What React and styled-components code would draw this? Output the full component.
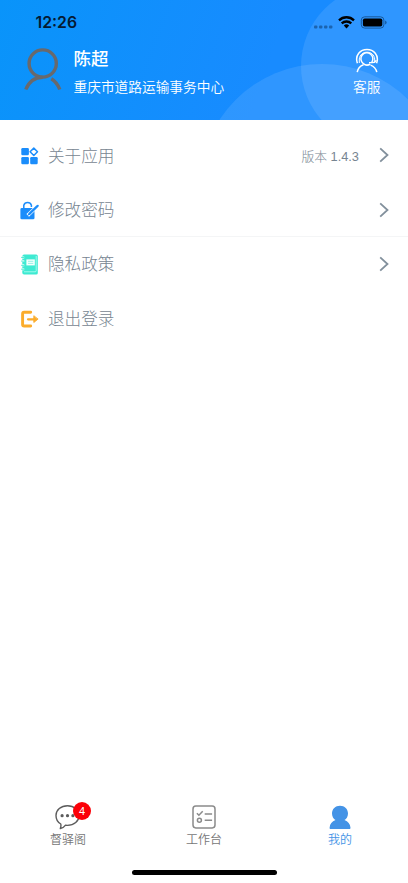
import React from "react";
import styled, { createGlobalStyle } from "styled-components";

const App = () => {
  return (
    <Screen>
      <GlobalStyle />
      <Header>
        <StatusBar>
          <Time>12:26</Time>
          <StatusIcons />
        </StatusBar>
        <Profile>
          <AvatarIcon />
          <Info>
            <Name>陈超</Name>
            <Company>重庆市道路运输事务中心</Company>
          </Info>
          <Service>
            <ServiceIcon />
            <span>客服</span>
          </Service>
        </Profile>
      </Header>
      <Menu>
        {rows.map(({ label, Icon, extra, arrow, divider }) => (
          <Row key={label} $divider={divider}>
            <Icon />
            <Label>{label}</Label>
            {extra && <Extra>{extra}</Extra>}
            {arrow && <Arrow />}
          </Row>
        ))}
      </Menu>
      <TabBar>
        {tabs.map(({ label, Icon, badge, active }) => (
          <Tab key={label} $active={active}>
            <Icon />
            <span>{label}</span>
            {badge && <Badge>{badge}</Badge>}
          </Tab>
        ))}
      </TabBar>
      <HomeArea>
        <HomeIndicator />
      </HomeArea>
    </Screen>
  );
};

const StatusIcons = () => (
  <svg width="76" height="18" viewBox="0 0 76 18">
    <g fill="#1b63af">
      <rect x="2" y="11.5" width="3.4" height="3" rx="1" />
      <rect x="7" y="11.5" width="3.4" height="3" rx="1" />
      <rect x="12" y="11.5" width="3.4" height="3" rx="1" />
      <rect x="17" y="11.5" width="3.4" height="3" rx="1" />
    </g>
    <g fill="none" stroke="#000" strokeWidth="2.3">
      <path d="M27 6.3a10.800 10.800 0 0 1 15 0" />
      <path d="M29.700 9.400a7 7 0 0 1 9.600 0" />
    </g>
    <path d="M31.800 11.500a4.200 4.200 0 0 1 5.400 0l-2.700 2.900z" fill="#000" />
    <rect x="49.3" y="2.8" width="22.6" height="11.3" rx="3.4" fill="none" stroke="#17599d" />
    <rect x="50.9" y="4.400" width="19.4" height="8.1" rx="1.8" fill="#000" />
    <path d="M73.1 6.500v4q1.500-.6 1.500-2t-1.500-2" fill="#17599d" />
  </svg>
);

const AvatarIcon = () => (
  <AvatarSvg width="38" height="43" viewBox="0 0 38 43" fill="none" stroke="#68696d" strokeWidth="3.4">
    <circle cx="18.7" cy="15.5" r="13.6" />
    <path d="M1.8 41.5C4.5 34.5 10.2 29.4 18.7 29.2M27.3 30.8c4 2.5 6.7 6 8.5 10.7" />
  </AvatarSvg>
);

const ServiceIcon = () => (
  <svg width="24" height="25" viewBox="0 0 24 25" fill="none" stroke="#fff" strokeWidth="1.5">
    <path d="M2.4 15.2C-.5 6.8 5.6 1.5 12 1.5s12.5 5.3 9.6 13.7" />
    <path d="M4.3 15v-4C4.8 6.8 8 4.2 12 4.2s7.2 2.6 7.7 6.8v4" strokeWidth="1" />
    <path d="M16.8 14.2A6 6 0 1 0 8.3 15.6c2.3 2 5 1.7 7 .4" />
    <path d="M14 14.6h3.4q3 0 3.8-2.5" strokeWidth="1.3" />
    <path d="M2.2 24.2c.7-3.8 2.8-6.2 6.3-7.4M15.6 17.1c3.4 1.3 5.4 3.5 6.2 7.1" />
  </svg>
);

const AppsIcon = () => (
  <svg width="20" height="20" viewBox="0 0 20 20" fill="#1b8dfb">
    <rect x="1.3" y="2.1" width="7.6" height="7.1" rx="1.2" />
    <rect x="1.3" y="11" width="7.6" height="7.2" rx="1.2" />
    <rect x="10.2" y="11" width="7.5" height="7.2" rx="1.2" />
    <path d="M13.8 2.1 17.5 5.8 13.8 9.5 10.1 5.8z" fill="none" stroke="#1b8dfb" strokeWidth="1.5" strokeLinejoin="round" />
  </svg>
);

const PasswordIcon = () => (
  <svg width="20" height="20" viewBox="0 0 20 20">
    <path d="M3.8 9V5.2a4 4 0 0 1 7.6 0V7" fill="none" stroke="#1b8dfb" strokeWidth="1.5" />
    <rect x=".4" y="8" width="14.1" height="11.3" rx="1.4" fill="#1b8dfb" />
    <path d="M7.7 15.4 17.5 6" stroke="#fff" strokeWidth="3.6" />
    <path d="m7.4 15.8 1.1-2.8 7.8-7.5q1.4-1.2 2.3-.4.7.9-.5 2l-7.9 7.6z" fill="#1b8dfb" />
  </svg>
);

const PolicyIcon = () => (
  <svg width="20" height="22" viewBox="0 0 20 22">
    <path d="M4 1.500h12.200q1.600 0 1.600 1.600v16.800q0 1.600-1.600 1.600H4q-1.700 0-1.700-2V3.500q0-2 1.700-2z" fill="#3eead2" />
    <path d="M1.2 4.4h3M1.2 8.1h3M1.2 12.3h3M1.2 16.2h3" stroke="#fff" strokeWidth="2" />
    <path d="M1.2 4.4h3M1.2 8.1h3M1.2 12.3h3M1.2 16.2h3" stroke="#3eead2" strokeWidth="1" />
    <rect x="6.4" y="6.400" width="8.4" height="6" fill="#f5fffd" />
    <path d="M8 8.300h5.3M8 10.400h5.3" stroke="#80efdf" strokeWidth=".8" />
    <path d="M4 18.8h11.1q1.1 0 1.1-1V3" fill="none" stroke="#b8fff3" strokeWidth=".8" />
  </svg>
);

const LogoutIcon = () => (
  <svg width="20" height="20" viewBox="0 0 20 20" fill="none" stroke="#fbac2b" strokeWidth="2.9" strokeLinecap="round" strokeLinejoin="round">
    <path d="M10.700 3.200H4.100Q2.600 3.200 2.600 4.700v10.800Q2.600 17 4.100 17h6.600" />
    <path d="M8 10.3h6.6" strokeWidth="2.2" />
    <path d="M13.8 7.1v6.4l4-3.2z" fill="#fbac2b" strokeWidth=".9" />
  </svg>
);

const Arrow = () => (
  <ArrowSvg width="11" height="16" viewBox="0 0 11 16">
    <path d="M1.2 1.3 8.5 8l-7.3 6.7" fill="none" stroke="#82909c" strokeWidth="1.8" />
  </ArrowSvg>
);

const ChatIcon = () => (
  <svg width="28" height="26" viewBox="0 0 28 26">
    <path
      d="M13.5 1.7c6.6 0 11.5 4.2 11.5 9.8s-4.9 9.9-11.5 9.9l-2.2-.1c-1.3 1.8-3 2.8-5 3.2.7-1.3.9-3 .5-4.5C3.7 18.3 2 15.2 2 11.5c0-5.6 4.9-9.8 11.5-9.8z"
      fill="none"
      stroke="#5c5c5c"
      strokeWidth="1.4"
      strokeLinejoin="round"
    />
    <g fill="#5c5c5c">
      <circle cx="8.1" cy="11.7" r="1.6" />
      <circle cx="13.5" cy="11.7" r="1.6" />
      <circle cx="18.9" cy="11.7" r="1.6" />
    </g>
  </svg>
);

const WorkIcon = () => (
  <svg width="28" height="26" viewBox="0 0 28 26" fill="none" stroke="#8b8b8b" strokeWidth="1.5">
    <rect x="3" y="2.1" width="22" height="21.8" rx="2.8" />
    <path d="m6.9 9.2 2 2 3.8-4M14.7 9.9h7.4M14.7 16.2h7.4" />
    <circle cx="9.4" cy="16.3" r="2" />
  </svg>
);

const MineIcon = () => (
  <svg width="28" height="26" viewBox="0 0 28 26" fill="#4493e6">
    <path d="M14 1.8c4.6 0 8 3.3 8 7.8 0 3-1.4 5.3-3.5 6.5 3.500 1.300 5.700 4 6 7.700 0 .8-.4 1.200-1.100 1.200H4.700c-.8 0-1.200-.4-1.100-1.200.2-3.700 2.400-6.400 5.900-7.700C7.400 14.900 6 12.600 6 9.600c0-4.500 3.400-7.800 8-7.800z" />
  </svg>
);

const rows = [
  { label: "关于应用", Icon: AppsIcon, extra: "版本 1.4.3", arrow: true },
  { label: "修改密码", Icon: PasswordIcon, arrow: true, divider: true },
  { label: "隐私政策", Icon: PolicyIcon, arrow: true },
  { label: "退出登录", Icon: LogoutIcon },
];

const tabs = [
  { label: "督驿阁", Icon: ChatIcon, badge: 4 },
  { label: "工作台", Icon: WorkIcon },
  { label: "我的", Icon: MineIcon, active: true },
];

const GlobalStyle = createGlobalStyle`
  body {
    margin: 0;
    background: #fff;
    font-family: "Liberation Sans", "Noto Sans CJK SC", sans-serif;
  }
  svg {
    display: block;
    flex-shrink: 0;
  }
`;

const Screen = styled.div`
  display: flex;
  flex-direction: column;
  height: 883px;
  overflow: hidden;
`;

const Header = styled.header`
  position: relative;
  height: 119.5px;
  flex-shrink: 0;
  box-sizing: border-box;
  overflow: hidden;
  background: linear-gradient(110deg, #0994fa, #188bff 65%);
  &::before,
  &::after {
    content: "";
    position: absolute;
    border-radius: 50%;
    background: rgba(255, 255, 255, 0.1);
  }
  &::before {
    width: 162px;
    height: 162px;
    left: 301px;
    top: -15px;
  }
  &::after {
    width: 244px;
    height: 244px;
    left: 200px;
    top: 64px;
  }
`;

const StatusBar = styled.div`
  position: relative;
  z-index: 1;
  display: flex;
  justify-content: space-between;
  align-items: center;
  height: 20px;
  padding: 13px 20px 0 35.5px;
`;

const Time = styled.span`
  color: #051a33;
  font: 600 15.8px/20px Inter, sans-serif;
`;

const Profile = styled.div`
  position: relative;
  z-index: 1;
  display: flex;
  align-items: flex-start;
  padding: 14px 27.5px 0 24px;
`;

const AvatarSvg = styled.svg`
  margin-top: 1px;
`;

const Info = styled.div`
  display: flex;
  flex: 1;
  flex-direction: column;
  margin-left: 11.5px;
  color: #fff;
`;

const Name = styled.span`
  font-size: 17.5px;
  font-weight: 500;
  line-height: 24px;
`;

const Company = styled.span`
  margin-top: 7px;
  font-size: 13.7px;
  font-weight: 350;
  line-height: 20px;
`;

const Service = styled.div`
  display: flex;
  flex-direction: column;
  align-items: center;
  gap: 5px;
  margin-top: 1px;
  color: #fff;
  font-size: 13.7px;
  font-weight: 350;
  line-height: 20px;
`;

const Menu = styled.main`
  flex: 1;
  padding-top: 8.5px;
`;

const Row = styled.div`
  display: flex;
  align-items: center;
  box-sizing: border-box;
  height: 54.4px;
  padding: 2px 18px 0 20px;
  border-bottom: 1px solid ${({ $divider }) => ($divider ? "#f4f5f6" : "transparent")};
`;

const Label = styled.span`
  flex: 1;
  margin: 2px 0 0 8px;
  color: #778591;
  font-size: 16.6px;
  font-weight: 300;
  line-height: 24px;
`;

const Extra = styled.span`
  margin: 2px 20px 0 0;
  color: #778591;
  font-size: 12.8px;
  font-weight: 300;
  line-height: 18px;
`;

const ArrowSvg = styled.svg`
  margin-top: -1px;
`;

const TabBar = styled.nav`
  display: grid;
  grid-template-columns: repeat(3, 1fr);
  height: 53px;
  padding-top: 6px;
`;

const Tab = styled.div`
  position: relative;
  display: flex;
  flex-direction: column;
  align-items: center;
  gap: 1px;
  color: ${({ $active }) => ($active ? "#4493e6" : "#777")};
  font-size: 12px;
  font-weight: 350;
  line-height: 18px;
`;

const Badge = styled.span`
  position: absolute;
  left: 73px;
  top: -2px;
  width: 18px;
  height: 18px;
  border-radius: 50%;
  background: #fb0007;
  color: #fff;
  font-size: 11px;
  line-height: 18px;
  text-align: center;
`;

const HomeArea = styled.div`
  display: flex;
  justify-content: center;
  align-items: center;
  height: 26px;
`;

const HomeIndicator = styled.div`
  width: 145px;
  height: 5px;
  margin-top: 4px;
  border-radius: 3px;
  background: #000;
`;

export default App;
